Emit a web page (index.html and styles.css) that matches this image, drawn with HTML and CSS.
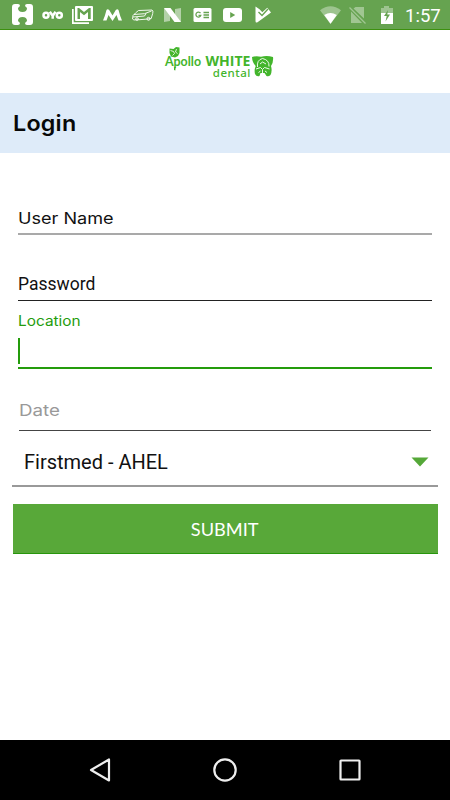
FILE: index.html
```html
<!DOCTYPE html>
<html lang="en">
<head>
<meta charset="utf-8">
<title>Login</title>
<link rel="stylesheet" href="styles.css">
</head>
<body>
<div class="screen">
  <header class="status">
    <svg class="status-left" width="290" height="30" viewBox="0 0 290 30" fill="#fff">
      <path d="M15 4h3q2 0 2 2l-2 2q0 4 4.500 4t4.500-4l-2-2q0-2 2-2h3q3 0 3 3v15q0 3-3 3h-3q-2 0-2-2l2-2q0-4-4.500-4t-4.500 4l2 2q0 2-2 2h-3q-3 0-3-3V7q0-3 3-3z"/>
      <g fill="none" stroke="#fff" stroke-width="2.500"><circle cx="46" cy="15.200" r="2.500"/><circle cx="59.300" cy="15.200" r="2.500"/><path d="M49.800 11.800l2.900 4 2.900-4M52.700 15v3.800"/></g>
      <path d="M72 9h1.700v13.300H89V24H72z"/>
      <path fill-rule="evenodd" d="M76 6h16q1 0 1 1v13q0 1-1 1H76q-1 0-1-1V7q0-1 1-1zm1.500 2v11H80v-7l4 3.300 4-3.300v7h2.700V8H89l-5 4-5-4z"/>
      <path d="M103 20.500q2-4.500 3.500-10.500 1-1.500 2.700 0l3.300 5.500 3.300-5.500q1.700-1.500 2.700 0 1.500 6 3.500 10.500h-3.500l-2-5.500-4 6-4-6-2 5.500z"/>
      <g fill="none" stroke="#fff" stroke-width=".9"><path d="M132.500 19q-.5-4 3-6l3-2.500 13.500-.5q1.500.5.700 3.500l-1.500 5-3.200.5-11 .9q-4 .5-4.500-.9zM134 14.500l10.500-.8 7-2.700M133 17l11.500-1 1.500-2.500"/><circle cx="137" cy="19" r="1.300"/><circle cx="148.500" cy="18.800" r="1.500"/></g>
      <path opacity=".5" d="M164 8l6 4v9l-6 1zM175 9l6-1v14l-6-3z"/><path d="M164 8h6.500L181 22h-6.500z"/>
      <rect x="193.500" y="8" width="18" height="14" rx="1.500"/>
      <g fill="none" stroke="#66a350" stroke-width="1.300"><path d="M200.500 13.200a2.500 2.500 0 1 0 .3 2.200h-2.300M203.500 12.500h5.500M203.500 15h5.500M203.500 17.500h5.500"/></g>
      <rect x="223" y="8" width="19" height="14" rx="3"/><path fill="#66a350" d="M230.200 12l5 3-5 3z"/>
      <path d="M255.500 6.500l4 2.800 2.800 3 5-4.500 3.700 4.700-13.500 9.800q-2 1-2-1.300z"/><path d="M258.500 12l3.500 3.500 6-6.500" fill="none" stroke="#66a350" stroke-width="1.400"/>
    </svg>
    <svg width="90" height="30" viewBox="315 0 90 30" fill="#fff">
      <path opacity=".36" d="M320 10.300q10.500-8 21 0L330.500 24z"/><path d="M324.200 15q6.300-4 12.600 0l-6.300 8.800z"/>
      <g opacity=".38"><path d="M355.500 7H364v11.500L353.500 8.500zM351 11.500L362 23h-11z"/><path d="M349.500 7.500l16 16" fill="none" stroke="#fff" stroke-width="1.300"/></g>
      <path opacity=".36" d="M384 6h5v2h4v5h-12V8h3z"/><path d="M381 13h12v11h-12z"/><path fill="#66a350" d="M388 10l-4 6h2.700l-1.200 5.500 4.500-7h-2.700z"/>
    </svg>
    <span class="clock">1:57</span>
  </header>
  <div class="brand">
    <svg width="112" height="36" viewBox="163 44 112 36" fill="#43b52c">
      <path d="M169.500 48.500l4 .5 2.500-2 3.500.5v5.500l-1.500 3-3 1.500-4-1-1.500-3.500z"/><path d="M170.500 50.500l3 1 1 2-2 2M176.500 49l-1 3 2 1.500" fill="none" stroke="#fff" stroke-width=".8"/>
      <path d="M174 67l1.800 0-.5 3.500-1.300-.5z"/>
      <text class="apollo" x="165" y="66" textLength="36" lengthAdjust="spacingAndGlyphs">Apollo</text>
      <text class="white" x="205.500" y="66" textLength="45" lengthAdjust="spacingAndGlyphs">WHITE</text>
      <text class="dental" x="212.800" y="76.500" textLength="37.500" lengthAdjust="spacing">dental</text>
      <path d="M252 57q4-1.500 9-.3 6-1.500 12 .3.700 5-2 9 1.500 5-.5 9-2 2-4 1l-2-3h-4l-1 3q-3 1-4.500-2-1-4 .7-8-3.500-3.500-3.700-9z"/>
      <g fill="none" stroke="#fff" stroke-width=".9"><path d="M257.500 67q-1-7 5-8.500 7 1.500 6.500 8M260 64l2.500-2 3.500 2M256 69l4.500-1.500 2 2 2-2 5 1.500M258.500 72.500l2-1.500M265 71l2 1.500M262.500 70v6"/></g>
    </svg>
  </div>
  <h1 class="title"><span>Login</span></h1>
  <main class="form">
    <div class="field user"><span>User Name</span></div>
    <div class="field password"><span>Password</span></div>
    <label class="label"><span>Location</span></label>
    <div class="location"><i class="caret"></i></div>
    <div class="field date"><span>Date</span></div>
    <div class="select"><span>Firstmed - AHEL</span>
      <svg width="18" height="10" viewBox="0 0 18 10"><path d="M.5.500h17L9 9.500z" fill="#55a838"/></svg>
    </div>
    <button class="submit"><span>SUBMIT</span></button>
  </main>
  <nav class="nav">
    <svg width="450" height="60" viewBox="0 740 450 60" fill="none" stroke="#eee" stroke-width="2.200" stroke-linejoin="round"><path d="M109 759.500v21L91 770z"/><circle cx="225" cy="770" r="10.700"/><rect x="340.500" y="760.500" width="19" height="19" rx=".5"/></svg>
  </nav>
</div>
</body>
</html>
```
FILE: styles.css
```css
* { box-sizing: border-box; }
body { margin: 0; background: #fff; font-family: Roboto, sans-serif; color: #111; }
.screen { width: 450px; height: 800px; display: flex; flex-direction: column; }
svg { display: block; flex: none; }
.status { height: 30px; display: flex; justify-content: space-between; background: #66a350; border-bottom: 1px solid #3c900f; padding-right: 10px; overflow: hidden; }
.status-left { margin-right: 25px; }
.clock { width: 35px; font-size: 18.500px; line-height: 32px; color: #fff; white-space: nowrap; }
.brand { height: 63px; display: flex; justify-content: center; padding: 14px 0 0 0; margin-left: -12px; }
.apollo { font: bold 12.800px Lato, sans-serif; }
.white { font: bold 13.300px "Open Sans", sans-serif; }
.dental { font: 500 11.500px "Noto Sans", sans-serif; }
.title { margin: 0; height: 60px; padding-left: 12.500px; background: #deebf9; font: 600 22px/60px Inter, sans-serif; color: #080808; }
.title span, .user span, .label span, .date span, .submit span { display: inline-block; transform-origin: 0 50%; }
.title span { letter-spacing: .2px; transform: scaleX(1.06); }
.form { flex: 1; padding: 0 13px 0 12px; display: flex; flex-direction: column; }
.field { margin: 0 5px 0 6px; border-bottom: 1px solid #222; display: flex; align-items: flex-end; }
.user { height: 82px; border-bottom: 2px solid #a9a9a9; font: 16px/20px Inter, sans-serif; padding-bottom: 5px; }
.user span { transform: scaleX(1.13); }
.password { height: 66px; font-size: 17.500px; line-height: 20px; padding-bottom: 6px; }
.label { margin: 10px 5px 0 5.500px; height: 20px; font: 14px/20px Inter, sans-serif; color: #249c0c; }
.label span { transform: scaleX(1.1); }
.location { margin: 0 5px 0 6px; height: 38px; padding-top: 7px; border-bottom: 2px solid #249c0c; }
.caret { display: block; width: 2px; height: 26px; background: #249c0c; }
.date { height: 62px; margin: 0 6px 0 7px; padding-bottom: 10px; border-color: #444; font: 16px/20px Inter, sans-serif; color: #999; }
.date span { transform: scaleX(1.17); }
.select { height: 56px; padding: 8px 9px 0 12px; margin-right: -.5px; display: flex; align-items: center; justify-content: space-between; border-bottom: 2px solid #999; font-size: 20px; }
.submit { height: 50px; margin: 17px -.5px 0 .5px; padding: 2px 0 0; border: 0; border-bottom: 1px solid #27960c; background: #58a839; color: #fff; font: 17px/47px Lato, sans-serif; }
.submit span { transform-origin: 50% 50%; transform: scaleX(1.07); }
.nav { height: 60px; background: #000; }
```
